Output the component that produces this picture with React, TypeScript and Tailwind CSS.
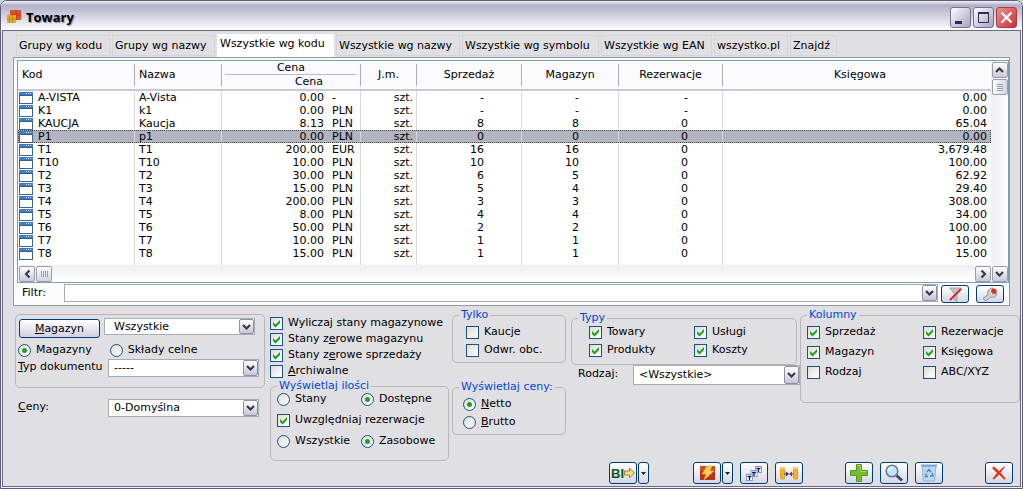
import type { InputHTMLAttributes, ReactNode, SelectHTMLAttributes } from "react";
import clsx from "clsx";

const tabs = [
  { label: "Grupy wg kodu", width: "w-[94px]" },
  { label: "Grupy wg nazwy", width: "w-[103px]" },
  { label: "Wszystkie wg kodu", width: "w-[117px]", active: true },
  { label: "Wszystkie wg nazwy", width: "w-[124px]" },
  { label: "Wszystkie wg symbolu", width: "w-[137px]" },
  { label: "Wszystkie wg EAN", width: "w-[111px]" },
  { label: "wszystko.pl", width: "w-[74px]" },
  { label: "Znajdź", width: "w-[47px]" },
];

// kod, nazwa, cena, waluta, sprzedaż, magazyn, rezerwacje, księgowa
const rows = [
  ["A-VISTA", "A-Vista", "0.00", "-", "-", "-", "-", "0.00"],
  ["K1", "k1", "0.00", "PLN", "-", "-", "-", "0.00"],
  ["KAUCJA", "Kaucja", "8.13", "PLN", "8", "8", "0", "65.04"],
  ["P1", "p1", "0.00", "PLN", "0", "0", "0", "0.00"],
  ["T1", "T1", "200.00", "EUR", "16", "16", "0", "3,679.48"],
  ["T10", "T10", "10.00", "PLN", "10", "10", "0", "100.00"],
  ["T2", "T2", "30.00", "PLN", "6", "5", "0", "62.92"],
  ["T3", "T3", "15.00", "PLN", "5", "4", "0", "29.40"],
  ["T4", "T4", "200.00", "PLN", "3", "3", "0", "308.00"],
  ["T5", "T5", "8.00", "PLN", "4", "4", "0", "34.00"],
  ["T6", "T6", "50.00", "PLN", "2", "2", "0", "100.00"],
  ["T7", "T7", "10.00", "PLN", "1", "1", "0", "10.00"],
  ["T8", "T8", "15.00", "PLN", "1", "1", "0", "15.00"],
];
const selectedKod = "P1";

type InputProps = InputHTMLAttributes<HTMLInputElement>;

function Check({ children, ...props }: InputProps & { children: ReactNode }) {
  return (
    <label className="flex h-[16px] items-center gap-[5px] whitespace-nowrap">
      <span className="grid size-[13px] shrink-0">
        <input
          type="checkbox"
          className="peer col-start-1 row-start-1 size-[13px] appearance-none border border-[#1c5180] bg-linear-to-br from-[#dcdcd7] to-white"
          {...props}
        />
        <svg viewBox="0 0 13 13" className="pointer-events-none col-start-1 row-start-1 hidden size-[13px] peer-checked:block">
          <path d="M3 5v3l2.500 2.500L10 6V3L5.500 7.500z" fill="#21a121" />
        </svg>
      </span>
      <span>{children}</span>
    </label>
  );
}

function Radio({ children, ...props }: InputProps & { children: ReactNode }) {
  return (
    <label className="flex h-[16px] items-center gap-[5px] whitespace-nowrap">
      <span className="grid size-[13px] shrink-0 place-items-center">
        <input
          type="radio"
          className="peer col-start-1 row-start-1 size-[13px] appearance-none rounded-full border border-[#1c5180] bg-linear-to-br from-[#dcdcd7] to-white"
          {...props}
        />
        <span className="pointer-events-none col-start-1 row-start-1 hidden size-[5px] rounded-full bg-[#21a121] peer-checked:block" />
      </span>
      <span>{children}</span>
    </label>
  );
}

function Chevron({ className }: { className?: string }) {
  return (
    <svg viewBox="0 0 9 6" className={clsx("h-[6px] w-[9px]", className)}>
      <path d="M1 1l3.500 3.500L8 1" fill="none" stroke="#3a3a44" strokeWidth="2.200" />
    </svg>
  );
}

function ArrowBox({ className }: { className?: string }) {
  return (
    <span
      className={clsx(
        "pointer-events-none flex w-[15px] items-center justify-center rounded-[2px] border border-[#8f8fa8] bg-linear-to-b from-white to-[#c5c5d9]",
        className
      )}
    >
      <Chevron />
    </span>
  );
}

function Combo({ className, value, ...props }: SelectHTMLAttributes<HTMLSelectElement> & { value: string }) {
  return (
    <div className={clsx("grid border border-[#a5acb2] bg-white", className)}>
      <select className="col-start-1 row-start-1 w-full appearance-none pl-[5px]" defaultValue={value} {...props}>
        <option>{value}</option>
      </select>
      <ArrowBox className="col-start-1 row-start-1 justify-self-end" />
    </div>
  );
}

function Group({ title, className, children }: { title: string; className?: string; children: ReactNode }) {
  return (
    <fieldset className={clsx("rounded-[5px] border border-[#bab5bb]", className)}>
      <legend className="ml-[6px] px-[2px] leading-[14px] text-[#0046d5]">{title}</legend>
      {children}
    </fieldset>
  );
}

function ToolButton({ label, className, children }: { label: string; className?: string; children: ReactNode }) {
  return (
    <button
      type="button"
      aria-label={label}
      className={clsx(
        "flex items-center justify-center rounded-[3px] border border-[#003c74] bg-linear-to-b from-white to-[#d6d6e6]",
        className ?? "h-[22px] w-[28px]"
      )}
    >
      {children}
    </button>
  );
}

function DropButton({ label }: { label: string }) {
  return (
    <ToolButton label={label} className="h-[22px] w-[11px]">
      <svg viewBox="0 0 5 3" className="h-[3px] w-[5px]">
        <path d="M0 0h5L2.500 3z" fill="#222" />
      </svg>
    </ToolButton>
  );
}

function RowIcon() {
  return (
    <svg viewBox="0 0 14 12" className="h-[12px] w-[14px] shrink-0">
      <rect x="0.5" y="0.5" width="13" height="11" fill="#fff" stroke="#3c6697" />
      <rect width="14" height="4" fill="#3f7ec0" />
      <path d="M0 3.500h14" stroke="#2f5f95" />
      <path d="M7 1.500h1m1 0h1m1 0h1" stroke="#cfe2f5" />
    </svg>
  );
}

function ScrollButton({ label, turn }: { label: string; turn: string }) {
  return (
    <button
      type="button"
      aria-label={label}
      className="flex size-[16px] items-center justify-center rounded-[2px] border border-[#9b9bad] bg-linear-to-b from-white to-[#c8c8da]"
    >
      <Chevron className={turn} />
    </button>
  );
}

function HeadCell({ children, className, last }: { children: ReactNode; className?: string; last?: boolean }) {
  return (
    <div className={clsx("flex h-[22px] items-center", !last && "border-r border-[#a9a9bf]", className)}>
      {children}
    </div>
  );
}

function TitleBar() {
  const box = "flex size-[21px] items-center justify-center rounded-[3px] border";
  return (
    <header className="flex h-[29px] items-center gap-[5px] bg-linear-to-b from-[#f4f4fa] via-[#b0b0c8] via-15% to-white pt-[3px] pr-[5px] pl-[6px]">
      <svg viewBox="0 0 14 14" className="size-[14px]">
        <rect x="3" y="0" width="11" height="10" fill="#e2502b" />
        <path d="M3 5h11M9 0v10" stroke="#b8341a" />
        <rect x="0" y="5" width="9" height="8" fill="#e0b020" />
        <path d="M2.500 5v8M5.500 5v8M0 9h9" stroke="#b98a10" />
      </svg>
      <h1 className="flex-1 font-['Open_Sans',sans-serif] text-[13px] leading-[18px] font-bold text-black [text-shadow:1px_1px_1px_#8b8ba0]">
        Towary
      </h1>
      <div className="flex gap-[2px]">
        <button type="button" aria-label="Minimalizuj" className={clsx(box, "border-[#6f7497] bg-linear-to-br from-white to-[#a3a3bd]")}>
          <svg viewBox="0 0 19 19" className="size-[19px]">
            <path d="M4 13h7v3H4z" fill="#2f2d4d" />
          </svg>
        </button>
        <button type="button" aria-label="Maksymalizuj" className={clsx(box, "border-[#6f7497] bg-linear-to-br from-white to-[#a3a3bd]")}>
          <svg viewBox="0 0 19 19" className="size-[19px]">
            <path d="M4.500 5v9.500h10V5z" fill="none" stroke="#2f2d4d" />
            <path d="M4 5h11" stroke="#2f2d4d" strokeWidth="2" />
          </svg>
        </button>
        <button type="button" aria-label="Zamknij okno" className={clsx(box, "border-[#b23a48] bg-linear-to-br from-[#f08c8c] to-[#c62f38]")}>
          <svg viewBox="0 0 19 19" className="size-[19px]">
            <path d="M4.500 4.500l10 10m0-10l-10 10" stroke="#fff" strokeWidth="2.400" />
          </svg>
        </button>
      </div>
    </header>
  );
}

function ProductTable() {
  const cell = "border-r border-[#d9d9dc] p-0";
  return (
    <div className="grid grid-cols-[1fr_17px] border border-[#7f9db9] bg-white">
      <table className="w-full table-fixed border-separate border-spacing-0 whitespace-nowrap">
        <colgroup>
          <col className="w-[117px]" />
          <col className="w-[87px]" />
          <col className="w-[106px]" />
          <col className="w-[33px]" />
          <col className="w-[56px]" />
          <col className="w-[105px]" />
          <col className="w-[97px]" />
          <col className="w-[104px]" />
          <col />
        </colgroup>
        <thead>
          <tr className="h-[30px] bg-[#fafaff] [&>th]:border-b-2 [&>th]:border-[#c9c9d8] [&>th]:p-0 [&>th]:font-normal">
            <th><HeadCell className="pl-[4px]">Kod</HeadCell></th>
            <th><HeadCell className="pl-[4px]">Nazwa</HeadCell></th>
            <th colSpan={2}>
              <HeadCell className="flex-col px-[3px] leading-[13px]">
                <span className="-mt-[3px] w-full border-b border-[#bcbccb]">Cena</span>
                <span className="w-full pl-[36px]">Cena</span>
              </HeadCell>
            </th>
            <th><HeadCell className="justify-center">J.m.</HeadCell></th>
            <th><HeadCell className="justify-center">Sprzedaż</HeadCell></th>
            <th><HeadCell className="justify-center">Magazyn</HeadCell></th>
            <th><HeadCell className="justify-center">Rezerwacje</HeadCell></th>
            <th><HeadCell className="justify-center pl-[6px]" last>Księgowa</HeadCell></th>
          </tr>
        </thead>
        <tbody>
          {rows.map(([kod, nazwa, cena, waluta, sprzedaz, magazyn, rezerwacje, ksiegowa]) => (
            <tr
              key={kod}
              className={clsx(
                "h-[13px] align-top leading-[13px] last:h-[18px]",
                kod === selectedKod && "bg-[#b2b4bf] outline-1 -outline-offset-1 outline-dotted outline-[#44444c]"
              )}
            >
              <td className={cell}>
                <div className="flex h-[13px] items-center gap-[5px] pl-px">
                  <RowIcon />
                  {kod}
                </div>
              </td>
              <td className={clsx(cell, "pl-[4px]")}>{nazwa}</td>
              <td className="p-0 pr-[4px] text-right">{cena}</td>
              <td className={clsx(cell, "pl-[4px]")}>{waluta}</td>
              <td className={clsx(cell, "pr-[3px] text-right")}>szt.</td>
              <td className={clsx(cell, "pr-[37px] text-right")}>{sprzedaz}</td>
              <td className={clsx(cell, "pr-[39px] text-right")}>{magazyn}</td>
              <td className={clsx(cell, "pr-[34px] text-right")}>{rezerwacje}</td>
              <td className="p-0 pr-[4px] text-right">{ksiegowa}</td>
            </tr>
          ))}
        </tbody>
      </table>
      <div className="flex flex-col items-center gap-px bg-linear-to-r from-[#eeeef4] to-white pt-px">
        <ScrollButton label="W górę" turn="rotate-180" />
        <div className="flex h-[16px] w-[16px] flex-col items-center justify-center gap-px rounded-[2px] border border-[#9b9bad] bg-linear-to-r from-white to-[#d3d3e0]">
          <span className="h-px w-[6px] bg-[#9a9aae]" />
          <span className="h-px w-[6px] bg-[#9a9aae]" />
          <span className="h-px w-[6px] bg-[#9a9aae]" />
          <span className="h-px w-[6px] bg-[#9a9aae]" />
        </div>
      </div>
      <div className="flex h-[17px] items-center gap-px bg-linear-to-b from-[#eeeef4] to-white pl-px">
        <ScrollButton label="W lewo" turn="rotate-90" />
        <div className="flex size-[16px] items-center justify-center gap-px rounded-[2px] border border-[#9b9bad] bg-linear-to-b from-white to-[#d3d3e0]">
          <span className="h-[6px] w-px bg-[#9a9aae]" />
          <span className="h-[6px] w-px bg-[#9a9aae]" />
          <span className="h-[6px] w-px bg-[#9a9aae]" />
          <span className="h-[6px] w-px bg-[#9a9aae]" />
        </div>
        <span className="flex-1" />
        <ScrollButton label="W prawo" turn="-rotate-90" />
      </div>
      <div className="flex h-[17px] items-center justify-center">
        <ScrollButton label="W dół" turn="" />
      </div>
    </div>
  );
}

function FilterBar() {
  return (
    <div className="flex items-start pt-px pr-[5px] pl-[5px]">
      <label htmlFor="filtr" className="w-[42px] pt-px leading-[16px]">Filtr:</label>
      <div className="grid h-[18px] flex-1 border border-[#a5acb2] bg-white">
        <input id="filtr" type="text" className="col-start-1 row-start-1 w-full px-1 outline-none" />
        <ArrowBox className="col-start-1 row-start-1 justify-self-end" />
      </div>
      <div className="mt-px mb-px ml-[3px] flex gap-[7px]">
        <ToolButton label="Wyczyść filtr" className="h-[18px] w-[28px]">
          <svg viewBox="0 0 16 16" className="size-[15px]">
            <path d="M2 1h12L9.500 7v8l-3-1.500V7z" fill="#c6c6c6" stroke="#9b9b9b" />
            <path d="M2 14L14 2" stroke="#e0202a" strokeWidth="2.200" />
          </svg>
        </ToolButton>
        <ToolButton label="Ustawienia filtra" className="h-[18px] w-[28px]">
          <svg viewBox="0 0 18 16" className="h-[16px] w-[18px]">
            <path
              d="M2 12.500L7 8.500C6 5 8 2 12 2l-1.500 3 2 3 3.500-.5C15.500 10.500 12.500 12 9.500 11L5 15z"
              fill="#d2d2d2"
              stroke="#8f8f8f"
            />
            <circle cx="13" cy="5" r="2.600" fill="#dd3312" />
          </svg>
        </ToolButton>
      </div>
    </div>
  );
}

function Options() {
  return (
    <div className="flex items-start pt-[2px] pl-[12px]">
      <div className="w-[255px] shrink-0 pt-[6px]">
        <div className="h-[74px] w-[250px] rounded-[5px] border border-[#bab5bb] pt-[3px] pl-[2px]">
          <div className="flex items-start gap-[4px] pl-px">
            <button
              type="button"
              className="mt-px h-[19px] w-[81px] rounded-[3px] border border-[#003c74] bg-linear-to-b from-white to-[#d0d0e2] leading-[16px]"
            >
              <u>M</u>agazyn
            </button>
            <Combo aria-label="Magazyn" value="Wszystkie" className="h-[17px] w-[151px] [&>select]:pl-[9px]" />
          </div>
          <div className="mt-[4px] flex gap-[18px]">
            <Radio name="miejsce" defaultChecked>Magazyny</Radio>
            <Radio name="miejsce">Składy celne</Radio>
          </div>
          <div className="mt-px flex items-start">
            <label htmlFor="typ" className="w-[90px] leading-[16px] whitespace-nowrap"><u>T</u>yp dokumentu</label>
            <Combo id="typ" value="-----" className="h-[18px] w-[151px]" />
          </div>
        </div>
        <div className="mt-[11px] flex items-start pl-[3px]">
          <label htmlFor="ceny" className="w-[90px] leading-[16px]"><u>C</u>eny:</label>
          <Combo id="ceny" value="0-Domyślna" className="h-[18px] w-[151px]" />
        </div>
      </div>

      <div className="w-[182px] shrink-0 pt-[7px]">
        <Check defaultChecked>Wyliczaj stany magazynowe</Check>
        <Check defaultChecked>Stany z<u>e</u>rowe magazynu</Check>
        <Check defaultChecked>Stany z<u>e</u>rowe sprzedaży</Check>
        <Check><u>A</u>rchiwalne</Check>
        <Group title="Wyświetlaj ilości" className="h-[82px] w-[179px]">
          <div className="-mt-[2px] grid grid-cols-[84px_1fr] gap-y-[5px] pl-[6px]">
            <Radio name="ilosci">Stany</Radio>
            <Radio name="ilosci" defaultChecked>Dostępne</Radio>
            <div className="col-span-2">
              <Check defaultChecked>Uwzględniaj rezerwacje</Check>
            </div>
            <Radio name="zakres">Wszystkie</Radio>
            <Radio name="zakres" defaultChecked>Zasobowe</Radio>
          </div>
        </Group>
      </div>

      <div className="flex w-[119px] shrink-0 flex-col gap-[17px]">
        <Group title="Tylko" className="h-[55px] w-[114px]">
          <div className="flex flex-col gap-[2px] pt-[2px] pl-[13px]">
            <Check>Kaucje</Check>
            <Check>Odwr. obc.</Check>
          </div>
        </Group>
        <Group title="Wyświetlaj ceny:" className="h-[55px] w-[114px]">
          <div className="flex flex-col gap-[2px] pt-[2px] pl-[10px]">
            <Radio name="ceny" defaultChecked><u>N</u>etto</Radio>
            <Radio name="ceny"><u>B</u>rutto</Radio>
          </div>
        </Group>
      </div>

      <div className="w-[229px] shrink-0 pt-[3px]">
        <Group title="Typy" className="h-[54px] w-[226px]">
          <div className="-mt-px grid grid-cols-[105px_1fr] gap-y-[2px] pl-[17px]">
            <Check defaultChecked>Towary</Check>
            <Check defaultChecked>Usługi</Check>
            <Check defaultChecked>Produkty</Check>
            <Check defaultChecked>Koszty</Check>
          </div>
        </Group>
        <div className="flex pl-[7px]">
          <label htmlFor="rodzaj" className="w-[55px] leading-[18px]">Rodzaj:</label>
          <Combo id="rodzaj" value="<Wszystkie>" className="h-[20px] flex-1" />
        </div>
      </div>

      <Group title="Kolumny" className="h-[95px] min-w-0 flex-1">
        <div className="grid grid-cols-[116px_1fr] gap-y-[4px] pt-[2px] pl-[6px]">
          <Check defaultChecked>Sprzedaż</Check>
          <Check defaultChecked>Rezerwacje</Check>
          <Check defaultChecked>Magazyn</Check>
          <Check defaultChecked>Księgowa</Check>
          <Check>Rodzaj</Check>
          <Check>ABC/XYZ</Check>
        </div>
      </Group>
    </div>
  );
}

function Toolbar() {
  return (
    <div className="flex justify-end pt-px pr-[7px] pb-[2px]">
      <div className="flex gap-px">
        <ToolButton label="BI">
          <span className="font-['Liberation_Sans',sans-serif] text-[13px] leading-none font-bold text-[#0b5a1c]">BI</span>
          <svg viewBox="0 0 11 12" className="h-[12px] w-[11px]">
            <path d="M.5 4h5V1l5 5-5 5V8h-5z" fill="#f3dc8e" stroke="#a5812a" />
          </svg>
        </ToolButton>
        <DropButton label="Opcje BI" />
      </div>
      <div className="ml-[44px] flex gap-px">
        <ToolButton label="Operacje">
          <svg viewBox="0 0 15 16" className="h-[16px] w-[15px]">
            <rect y="1" width="15" height="14" fill="#b8331a" />
            <path d="M0 1h15v5H0z" fill="#d04a28" />
            <path d="M7 1h5l-2 5h4L4 15l2-6H2z" fill="#ffcf55" stroke="#f0a030" strokeWidth=".6" />
          </svg>
        </ToolButton>
        <DropButton label="Więcej operacji" />
      </div>
      <div className="ml-[7px] flex gap-[7px]">
        <ToolButton label="Kolejne teksty">
          <svg viewBox="0 0 16 15" className="h-[15px] w-[16px]">
            {[[9.5, 0.5], [5, 4.5], [0.5, 8.5]].map(([x, y]) => (
              <g key={x} transform={`translate(${x} ${y})`}>
                <rect width="6" height="6" fill="#fff" stroke="#7f9ccb" />
                <path d="M1 2h4M3 2v3.500" stroke="#111c4a" strokeWidth="1.300" />
              </g>
            ))}
          </svg>
        </ToolButton>
        <ToolButton label="Przenieś">
          <svg viewBox="0 0 20 14" className="h-[14px] w-[20px]">
            <rect x="1.500" y="3" width="4" height="10" rx="1" fill="#f4b51f" stroke="#e0a020" />
            <rect x="14.500" y="3" width="4" height="10" rx="1" fill="#f4b51f" stroke="#e0a020" />
            <path d="M1 2h5M14 2h5" stroke="#f6d070" strokeWidth="2" />
            <path d="M5 8h3" stroke="#1c2fc0" />
            <path d="M7 5.500L10 8l-3 2.500z" fill="#1c2fc0" />
            <path d="M12 8h3" stroke="#d01818" />
            <path d="M13 5.500L10 8l3 2.500z" fill="#d01818" />
          </svg>
        </ToolButton>
      </div>
      <div className="ml-[42px] flex gap-[7px]">
        <ToolButton label="Dodaj">
          <svg viewBox="0 0 18 18" className="size-[18px]">
            <path d="M6.500.5h5v6h6v5h-6v6h-5v-6h-6v-5h6z" fill="#79bd2b" stroke="#4d9a1b" />
            <path d="M7.500 1.500h3v6h6" fill="none" stroke="#a5da5c" />
          </svg>
        </ToolButton>
        <ToolButton label="Podgląd">
          <svg viewBox="0 0 18 18" className="size-[18px]">
            <path d="M11 11l6 5.500" stroke="#3d4a5a" strokeWidth="3" />
            <circle cx="7" cy="7" r="5.800" fill="#c3e3fa" stroke="#5d7fa8" strokeWidth="1.600" />
            <path d="M3.500 7A3.500 3.500 0 017 3.500" fill="none" stroke="#fff" strokeWidth="1.400" />
          </svg>
        </ToolButton>
        <ToolButton label="Usuń">
          <svg viewBox="0 0 16 18" className="h-[18px] w-[16px]">
            <path d="M1 2h14l-1.500 15h-11z" fill="#b9d8f2" stroke="#8db4dc" />
            <path d="M0 1.500h16" stroke="#7fa5cc" strokeWidth="2" />
            <path d="M6 8l2-2.500L10 8M11 9l1 3H9M7 12.500H4.500l1-3" fill="none" stroke="#4f7fae" strokeWidth="1.300" />
          </svg>
        </ToolButton>
      </div>
      <div className="ml-[42px]">
        <ToolButton label="Zamknij">
          <svg viewBox="0 0 16 14" className="h-[14px] w-[16px]">
            <path d="M1 2l2-1.500 5 4.500L13 .5l1 .5-4.500 5.500L15 13l-2 .5L8 8.500 3 13.500 1.500 12.500 6 7z" fill="#e8331c" />
          </svg>
        </ToolButton>
      </div>
    </div>
  );
}

export default function App() {
  return (
    <div className="bg-[#c9d3e6] font-['DejaVu_Sans',Verdana,sans-serif] text-[11px] leading-[14px] text-black">
      <div className="overflow-hidden rounded-t-[7px] border border-[#5e5b7a] bg-[#f3f3f9]">
        <TitleBar />
        <main className="mx-px mb-px border border-[#6b6886] bg-[#e0dfe3] pt-[2px]">
          <div role="tablist" className="flex h-[24px] items-end gap-[2px] pl-[13px]">
            {tabs.map(({ label, width, active }) => (
              <button
                key={label}
                type="button"
                role="tab"
                aria-selected={!!active}
                className={clsx(
                  "border pl-[2px] text-left whitespace-nowrap",
                  width,
                  active ? "h-[23px] border-white bg-white pb-[4px]" : "mb-px h-[21px] border-[#d5d4d9]"
                )}
              >
                {label}
              </button>
            ))}
          </div>
          <section className="mr-[10px] ml-[10px] border border-[#919b9c] bg-[#fcfcfe] pt-[2px] pb-px pl-[3px]">
            <ProductTable />
            <FilterBar />
          </section>
          <Options />
          <Toolbar />
        </main>
      </div>
    </div>
  );
}
